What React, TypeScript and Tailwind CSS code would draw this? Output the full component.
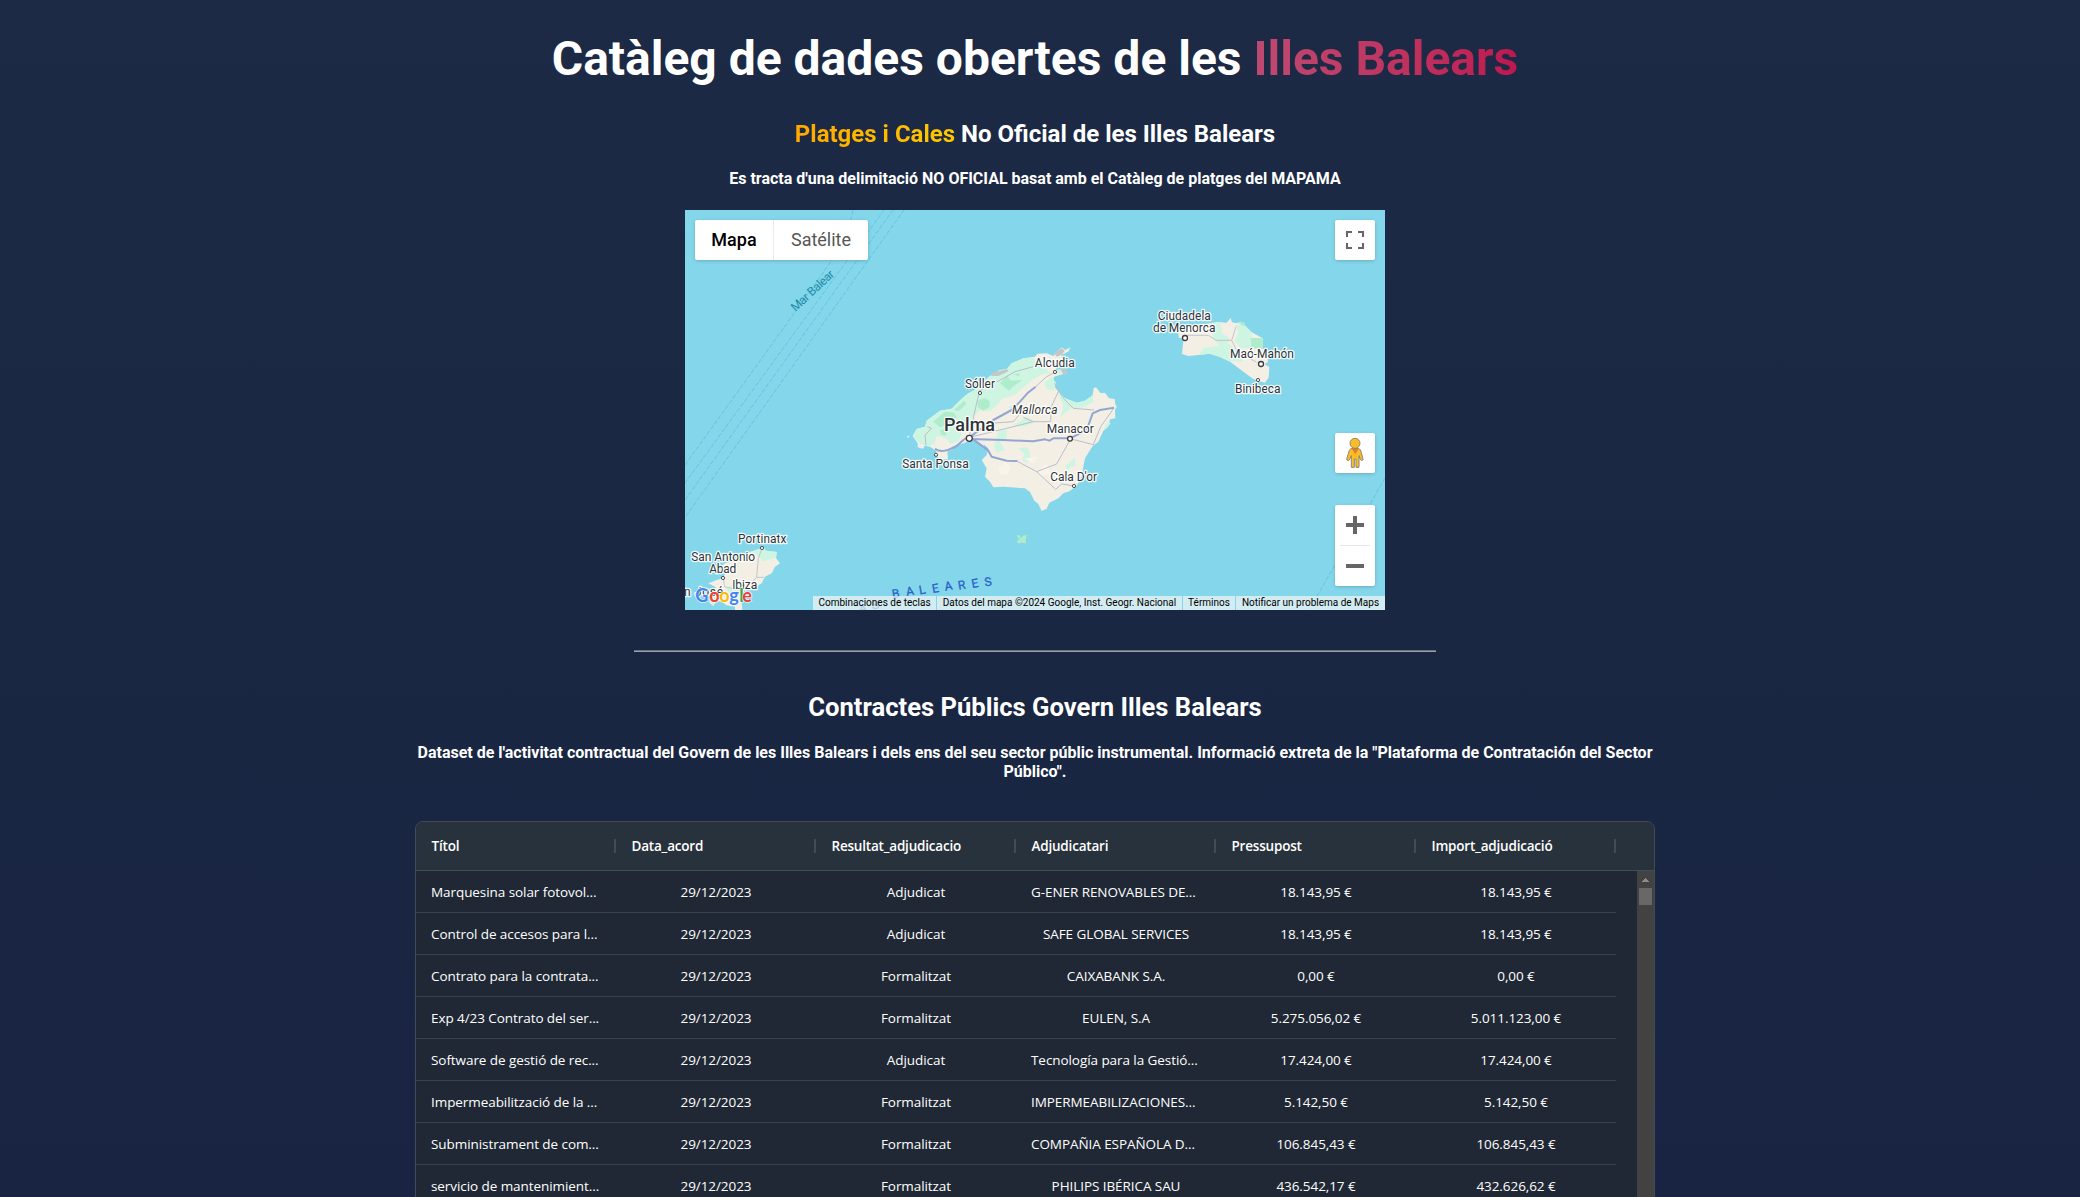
const COLUMNS = ["Títol", "Data_acord", "Resultat_adjudicacio", "Adjudicatari", "Pressupost", "Import_adjudicació"];

const ROWS = [
  ["Marquesina solar fotovol...", "29/12/2023", "Adjudicat", "G-ENER RENOVABLES DE...", "18.143,95 €", "18.143,95 €"],
  ["Control de accesos para l...", "29/12/2023", "Adjudicat", "SAFE GLOBAL SERVICES", "18.143,95 €", "18.143,95 €"],
  ["Contrato para la contrata...", "29/12/2023", "Formalitzat", "CAIXABANK S.A.", "0,00 €", "0,00 €"],
  ["Exp 4/23 Contrato del ser...", "29/12/2023", "Formalitzat", "EULEN, S.A", "5.275.056,02 €", "5.011.123,00 €"],
  ["Software de gestió de rec...", "29/12/2023", "Adjudicat", "Tecnología para la Gestió...", "17.424,00 €", "17.424,00 €"],
  ["Impermeabilització de la ...", "29/12/2023", "Formalitzat", "IMPERMEABILIZACIONES...", "5.142,50 €", "5.142,50 €"],
  ["Subministrament de com...", "29/12/2023", "Formalitzat", "COMPAÑIA ESPAÑOLA D...", "106.845,43 €", "106.845,43 €"],
  ["servicio de mantenimient...", "29/12/2023", "Formalitzat", "PHILIPS IBÉRICA SAU", "436.542,17 €", "432.626,62 €"],
];

type LabelProps = { x: number; y: number; w: number; text: string; size?: number; weight?: number; italic?: boolean };

function PlaceLabel({ x, y, w, text, size = 12, weight = 400, italic }: LabelProps) {
  return (
    <text
      x={x - w / 2}
      y={y}
      textLength={w}
      fontSize={size}
      fontWeight={weight}
      fontStyle={italic ? "italic" : "normal"}
      fill="#2f3338"
      stroke="#ffffff"
      strokeOpacity={0.9}
      strokeWidth={2.6}
      strokeLinejoin="round"
      paintOrder="stroke"
    >
      {text}
    </text>
  );
}

function Town({ x, y, r = 1.6 }: { x: number; y: number; r?: number }) {
  return <circle cx={x} cy={y} r={r} fill="#fff" stroke="#3a3a3a" strokeWidth={r > 2 ? 1.3 : 0.9} />;
}

function Mallorca() {
  return (
    <g transform="translate(205 120) scale(0.33333)">
      <path
        fill="#f4efe5"
        d="M68 318 80 297 105 290 110 272 150 242 185 236 215 206 235 190 255 180 270 165 300 138 330 120 350 118 365 100 400 85 435 80 442 71 470 70 490 78 497 68 515 52 526 60 541 52 536 64 515 75 516 88 500 104 498 120 525 118 530 130 512 134 492 140 488 162 505 185 525 205 560 218 585 212 608 196 611 174 618 172 632 190 645 188 657 205 674 207 676 222 680 230 675 240 676 265 660 268 655 290 640 302 625 335 608 348 585 385 580 410 576 435 560 468 538 484 520 490 505 505 478 518 470 536 455 543 445 522 433 512 427 500 420 486 405 475 340 470 310 472 300 455 285 440 290 415 275 390 290 375 295 355 280 342 262 336 245 330 215 342 200 345 185 360 172 365 174 388 148 388 140 376 138 362 120 350 105 345 100 356 86 350 82 338Z"
      />
      <path
        fill="#cdf5e1"
        d="M68 318 80 297 105 290 110 272 150 242 185 236 215 206 235 190 255 180 270 165 300 138 330 120 350 118 365 100 400 85 430 82 438 100 470 118 482 130 460 132 430 148 408 166 372 196 335 206 325 222 300 244 270 240 245 262 240 290 215 308 205 335 180 342 172 326 140 318 134 340 116 350 90 342Z"
      />
      <g fill="#cdf5e1">
        <path d="M462 160 484 140 498 158 492 182 472 178Z" />
        <path d="M500 185 525 205 560 218 585 212 608 196 611 215 580 232 540 236 512 262 520 226Z" />
        <path d="M325 305 350 296 350 325 330 335 344 360 318 368 312 350Z" />
        <path d="M385 355 412 352 422 370 412 400 398 392 402 370Z" />
        <path d="M370 285 410 262 435 275 400 290Z" />
        <path d="M525 408 555 384 556 408 540 412 534 422Z" />
        <path d="M640 300 650 278 664 280Z" />
        <path d="M500 120 524 118 526 130 505 132Z" />
        <path d="M375 240 350 230 372 226Z" />
      </g>
      <g fill="#aeeccb">
        <path d="M262 212 285 204 300 215 298 232 280 242 264 232Z" />
        <path d="M130 275 165 245 192 248 200 262 180 282 150 292Z" />
        <path d="M330 160 352 136 362 152 396 150 366 172 358 182Z" />
        <path d="M192 240 222 212 230 222 205 244Z" />
        <path d="M370 132 390 130 386 140Z" />
        <path d="M150 300 172 298 166 318 152 312Z" />
      </g>
      <path fill="#f8f4ec" d="M325 412 348 396 362 412 352 435 330 432ZM400 386 440 380 432 400ZM440 425 470 400 480 430 450 440Z" />
      <path fill="#c4c7c8" d="M306 128 352 118 355 124 325 138 304 138ZM492 70 515 54 524 62 516 74 500 80ZM510 115 530 118 530 130 520 134Z" />
      <path fill="#eeeeee" d="M82 345 98 344 96 356 84 352ZM260 320 285 335 280 350 262 336Z" />
      <g fill="none" stroke="#b9bec9" strokeWidth="3">
        <path d="M238 320 262 210 268 190M238 320 300 280 370 275 400 240M238 322 350 295 430 275 480 275M430 275 400 262M482 275 484 230 505 185M437 170 470 140 494 128M494 160 520 205 550 235 612 240M380 393 440 425 497 478 515 462 552 468M440 425 500 402 540 330M540 326 610 344 632 290 672 234M265 185 340 145 375 125 430 110M108 345 105 315 125 295 112 290" />
      </g>
      <g fill="none" stroke="#93a6d1" strokeWidth="6" strokeLinejoin="round">
        <path d="M135 356C150 368 175 362 185 355C205 350 210 338 220 330L238 318" />
        <path d="M238 322 310 270 365 240 390 215 412 190 437 170" />
        <path d="M238 327 340 330 430 334 465 328 478 332 490 325 540 325 590 300 608 250 630 240 672 233" />
        <path d="M250 328 295 362 305 380 350 392 382 393" />
      </g>
      <path fill="#aeeccb" d="M380 616 390 616 391 625 400 617 411 614 407 628 408 640 396 638 384 640 380 632 388 629Z" />
      <path fill="#d9f3ee" d="M50 320 58 316 56 324Z" />
    </g>
  );
}

function Menorca() {
  return (
    <g transform="translate(445 -5) scale(0.33333)">
      <path
        fill="#f4efe5"
        d="M145 382 165 372 230 356 262 351 290 353 302 339 306 352 320 355 332 350 345 362 365 382 398 400 398 430 412 442 414 470 404 478 418 486 416 518 405 533 385 528 370 522 340 500 300 470 270 456 240 446 205 450 175 453 156 447 158 425 161 400 146 398Z"
      />
      <path fill="#cdf5e1" d="M240 356 272 352 275 385 300 400 292 415 318 432 340 470 300 468 270 456 240 446 206 450 222 428 268 422 250 400Z" />
      <path fill="#cdf5e1" d="M318 360 342 358 365 382 364 430 330 430 314 405 325 385Z" />
      <path fill="#aeeccb" d="M362 398 398 400 398 432 364 430ZM320 352 344 352 342 364Z" />
      <path fill="none" stroke="#c3c6cc" strokeWidth="3" d="M168 391 235 391 258 406 305 406 318 365M305 406 322 440 380 472" />
    </g>
  );
}

function Ibiza() {
  return (
    <g transform="translate(-5 320) scale(0.33333)">
      <path
        fill="#f4efe5"
        d="M210 66 235 58 252 54 258 62 290 66 288 84 300 100 285 110 275 130 255 140 245 160 225 172 200 180 190 198 185 215 187 240 165 240 165 230 140 226 125 215 110 212 100 228 88 218 90 190 108 172 85 160 110 150 128 145 135 132 120 112 135 100 170 90Z"
      />
      <path fill="#cdf5e1" d="M210 66 235 58 252 54 258 62 290 66 288 84 250 94 236 78ZM138 176 160 162 178 178 150 190ZM92 200 112 205 100 226 88 218Z" />
      <path fill="none" stroke="#c3c6cc" strokeWidth="3" d="M244 60 235 85 230 142 205 168 190 190M130 146 134 170 180 182M230 142 252 142" />
    </g>
  );
}

const SEA_LETTERS: [string, number, number][] = [
  ["A", 178.3, 402.5],
  ["S", 191, 399],
  ["B", 211.5, 387.5],
  ["A", 225.5, 385.3],
  ["L", 238, 384],
  ["E", 251, 382.3],
  ["A", 264, 380.2],
  ["R", 277.3, 379],
  ["E", 290.7, 377.3],
  ["S", 303.7, 375.8],
];

const GOOGLE: [string, number, string][] = [
  ["G", 10.3, "#4285f4"],
  ["o", 24.2, "#ea4335"],
  ["o", 34.2, "#fbbc05"],
  ["g", 44.2, "#4285f4"],
  ["l", 54.2, "#34a853"],
  ["e", 57.3, "#ea4335"],
];

function MapCanvas() {
  return (
    <svg width="700" height="400" viewBox="0 0 700 400" className="block" fontFamily="Roboto, sans-serif">
      <rect width="700" height="400" fill="#84d6eb" />
      <g fill="none" stroke="#5cc3dd" strokeWidth="0.9" strokeDasharray="4.5 1.8">
        <path d="M0 255 108 105 147 50 162 26 168 0" />
        <path d="M0 273 199 0" />
        <path d="M0 290 208 0" />
        <path d="M1 306 219 0" />
        <path d="M700 268 632 386 622 400" />
      </g>
      <Mallorca />
      <Menorca />
      <Ibiza />
      <text x="110.500" y="102" transform="rotate(-43 110.5 102)" fontSize="12" textLength="54" fill="#1c8ba6">
        Mar Balear
      </text>
      <g fontSize="12" fill="#2b62c6" stroke="#2b62c6" strokeWidth="0.3" textAnchor="middle">
        {SEA_LETTERS.map(([c, x, y]) => (
          <text key={x} x={x} y={y} transform={`rotate(-10 ${x} ${y})`}>
            {c}
          </text>
        ))}
      </g>
      <Town x={295} y={183} />
      <Town x={284.3} y={228.3} r={3} />
      <Town x={251} y={244.8} />
      <Town x={370} y={162} />
      <Town x={385} y={228.7} r={2.4} />
      <Town x={389} y={276} />
      <Town x={500} y={128} r={2.5} />
      <Town x={576} y={154} r={2.5} />
      <Town x={573} y={170} />
      <Town x={77} y={338} />
      <Town x={38} y={368} />
      <PlaceLabel x={295} y={178.3} w={30} text="Sóller" />
      <PlaceLabel x={284.5} y={221.4} w={51} text="Palma" size={18} weight={500} />
      <PlaceLabel x={250.5} y={258.3} w={66.5} text="Santa Ponsa" />
      <PlaceLabel x={369.8} y={157.3} w={40} text="Alcudia" />
      <PlaceLabel x={349.8} y={204} w={45.500} text="Mallorca" italic />
      <PlaceLabel x={385.3} y={223.3} w={47} text="Manacor" />
      <PlaceLabel x={388.7} y={271} w={47} text="Cala D'or" />
      <PlaceLabel x={499.3} y={110.3} w={53} text="Ciudadela" />
      <PlaceLabel x={499.2} y={122.3} w={62.5} text="de Menorca" />
      <PlaceLabel x={577} y={148.3} w={64} text="Maó-Mahón" />
      <PlaceLabel x={572.8} y={183} w={45.500} text="Binibeca" />
      <PlaceLabel x={77.2} y={333.3} w={48.500} text="Portinatx" />
      <PlaceLabel x={38.2} y={351.3} w={64} text="San Antonio" />
      <PlaceLabel x={37.7} y={363.3} w={27} text="Abad" />
      <PlaceLabel x={59.7} y={379.3} w={25} text="Ibiza" />
      <PlaceLabel x={18.500} y={386} w={39} text="n José" />
      <g fontFamily="Lato, sans-serif" fontSize="18" fontWeight="700" stroke="#fff" strokeOpacity="0.75" strokeWidth="1.6" strokeLinejoin="round" paintOrder="stroke">
        {GOOGLE.map(([c, x, fill]) => (
          <text key={x} x={x} y={391.500} fill={fill}>
            {c}
          </text>
        ))}
      </g>
    </svg>
  );
}

function Pegman() {
  return (
    <svg width="18" height="32" viewBox="0 0 54 96">
      <path
        d="M18 34C10 36 9 42 7 50L2 66C3 72 10 72 11 67L16 56V91H25V66H30V91H39V56L43 67C45 72 52 71 51 66L46 48C44 40 43 36 36 34Z"
        fill="#fbbc26"
        stroke="#8d8574"
        strokeWidth="3"
      />
      <path d="M16 34H39L28 51Z" fill="#e37d2e" />
      <circle cx="27" cy="19" r="15" fill="#fbbc26" stroke="#8d8574" strokeWidth="3" />
    </svg>
  );
}

const BOX = "bg-white rounded-[2px] shadow-[0_1px_4px_-1px_rgba(0,0,0,0.3)]";

function MapWidget() {
  return (
    <section className="relative mt-[22px] h-[400px] w-[700px] overflow-hidden font-[Roboto,sans-serif]">
      <MapCanvas />
      <div className={`absolute left-[10px] top-[10px] flex h-10 text-[18px] leading-10 ${BOX}`}>
        <button className="w-[79px] rounded-l-[2px] border-r border-[#ebebeb] text-center font-medium text-black">Mapa</button>
        <button className="w-[94px] text-center text-[#565656]">Satélite</button>
      </div>
      <button className={`absolute right-[10px] top-[10px] grid size-10 place-items-center ${BOX}`}>
        <svg width="18" height="18" viewBox="0 0 18 18" fill="#666">
          <path d="M0 0v6h2V2h4V0zM16 0h-4v2h4v4h2V0zM16 16h-4v2h6v-6h-2zM2 12H0v6h6v-2H2z" />
        </svg>
      </button>
      <button className={`absolute right-[10px] top-[223px] grid size-10 place-items-center ${BOX}`}>
        <Pegman />
      </button>
      <div className={`absolute right-[10px] top-[295px] flex h-[81px] w-10 flex-col items-center ${BOX}`}>
        <button className="grid h-10 w-10 place-items-center">
          <svg width="18" height="18" viewBox="0 0 18 18" fill="#666">
            <path d="M18 7h-7V0H7v7H0v4h7v7h4v-7h7z" />
          </svg>
        </button>
        <div className="h-px w-[30px] bg-[#e6e6e6]" />
        <button className="grid h-10 w-10 place-items-center">
          <svg width="18" height="18" viewBox="0 0 18 18" fill="#666">
            <path d="M0 7h18v4H0z" />
          </svg>
        </button>
      </div>
      <div className="absolute bottom-0 right-0 flex h-[14px] gap-px text-center text-[10px] leading-[14px] text-black [&>span]:whitespace-nowrap [&>span]:bg-[rgba(245,245,245,0.7)]">
        <span className="w-[123px]">Combinaciones de teclas</span>
        <span className="w-[245px]">Datos del mapa ©2024 Google, Inst. Geogr. Nacional</span>
        <span className="w-[52px]">Términos</span>
        <span className="w-[149px]">Notificar un problema de Maps</span>
      </div>
    </section>
  );
}

function DataGrid() {
  return (
    <section className="mt-10 flex h-[600px] w-[1240px] shrink-0 flex-col overflow-hidden rounded-[8px] border border-[#434b58] bg-[#1f2834] font-['Open_Sans',sans-serif] text-[13.5px] text-white">
      <div className="flex h-[49px] shrink-0 border-b border-[#434c57] bg-[#28323d]">
        {COLUMNS.map((name) => (
          <div key={name} className="flex w-[200px] items-center justify-between pl-[15.5px] font-semibold tracking-[-0.2px]">
            <span>{name}</span>
            <span className="h-[14px] w-[2px] bg-[#414a55]" />
          </div>
        ))}
      </div>
      <div className="flex flex-1">
        <div className="w-[1221px]">
          {ROWS.map((row, r) => (
            <div key={r} className="flex h-[42px] w-[1200px] items-center border-b border-[#38424d] pt-[2px] tracking-[-0.07px]">
              {row.map((cell, c) => (
                <div key={c} className={`w-[200px] whitespace-nowrap px-[15px] ${cell.endsWith("...") ? "text-left" : "text-center"}`}>
                  {cell}
                </div>
              ))}
            </div>
          ))}
        </div>
        <div className="flex w-[17px] flex-col items-center bg-[#424242]">
          <div className="flex h-[17px] items-center">
            <svg width="7" height="4" viewBox="0 0 7 4" className="mt-px" fill="#8b8b8b">
              <path d="M3 0h1v1h1v1h1v1h1v1H0V3h1V2h1V1h1z" />
            </svg>
          </div>
          <div className="h-[17px] w-[13px] bg-[#686868]" />
        </div>
      </div>
    </section>
  );
}

export default function App() {
  return (
    <main className="flex h-[1197px] flex-col items-center overflow-hidden bg-linear-to-b from-[#1c2a45] to-[#182441] pr-[10px] text-center font-[Roboto,sans-serif] font-bold text-white">
      <h1 className="mt-[31px] text-[48px] leading-[56px]">
        Catàleg de dades obertes de les{" "}
        <span className="bg-linear-to-r from-[#bd4a72] to-[#bf1650] bg-clip-text text-transparent">Illes Balears</span>
      </h1>
      <h2 className="mt-[33px] text-2xl leading-7">
        <span className="bg-linear-to-r from-[#ffa800] to-[#ffc800] bg-clip-text text-transparent">Platges i Cales</span> No Oficial de les
        Illes Balears
      </h2>
      <p className="mt-[21px] text-base leading-[19px]">
        Es tracta d'una delimitació NO OFICIAL basat amb el Catàleg de platges del MAPAMA
      </p>
      <div className="text-left font-normal">
        <MapWidget />
      </div>
      <div className="mt-10 h-[2px] w-[802px] shrink-0 border-b border-t border-b-[#9a9fab] border-t-[#6c7280]" />
      <h2 className="mt-10 text-[25.6px] leading-[30px]">Contractes Públics Govern Illes Balears</h2>
      <p className="mt-[21px] w-[1240px] text-base leading-[19px]">
        Dataset de l'activitat contractual del Govern de les Illes Balears i dels ens del seu sector públic instrumental. Informació extreta de la
        "Plataforma de Contratación del Sector Público".
      </p>
      <div className="text-left font-normal">
        <DataGrid />
      </div>
    </main>
  );
}
